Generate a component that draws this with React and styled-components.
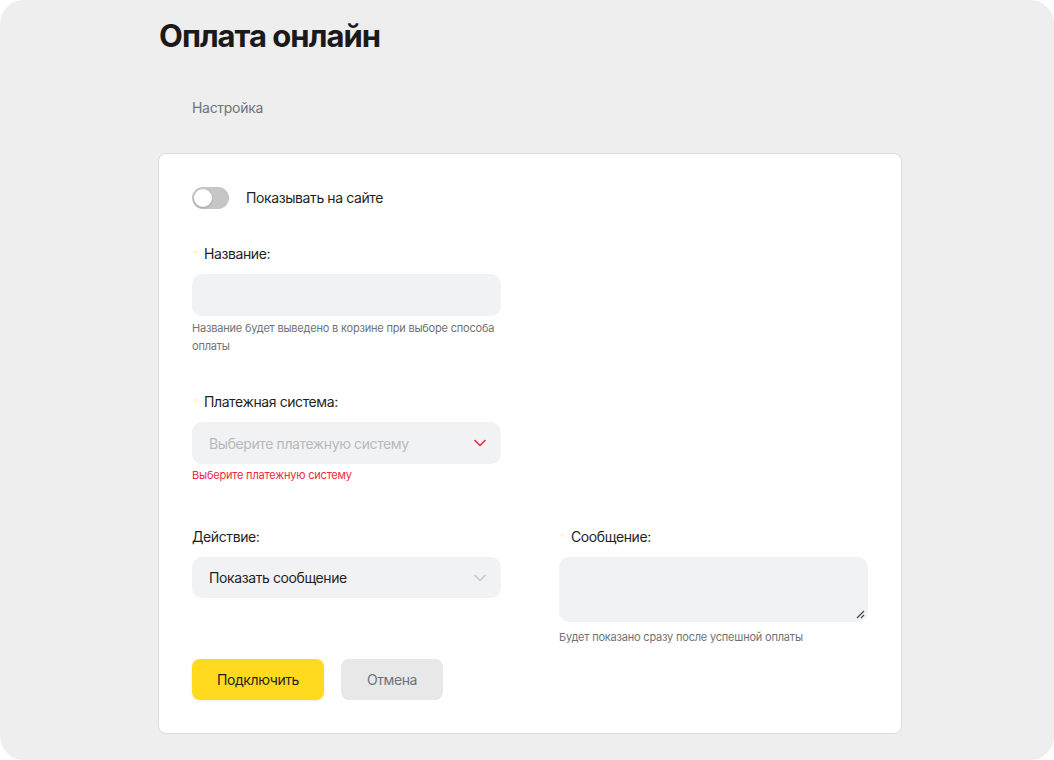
import React from "react";
import styled, { createGlobalStyle } from "styled-components";

const GlobalStyles = createGlobalStyle`
  html, body {
    margin: 0;
    padding: 0;
    background: #ffffff;
  }
  body {
    font-family: Inter, "Noto Sans", "Liberation Sans", sans-serif;
    color: #1f1f1f;
  }
  * { box-sizing: border-box; }
`;

const Screen = styled.div`
  width: 1054px;
  height: 760px;
  background: #eeeeee;
  border-radius: 24px;
  padding: 18px 0 0 158px;
`;

const Title = styled.h1`
  margin: 0 0 0 1px;
  font-size: 31px;
  line-height: 36px;
  font-weight: 700;
  color: #1a1a1a;
  letter-spacing: -1px;
`;

const Tab = styled.div`
  margin: 45px 0 0 34px;
  font-size: 14px;
  line-height: 18px;
  color: #6f7278;
  font-weight: 400;
  letter-spacing: -0.3px;
`;

const Card = styled.div`
  margin-top: 36px;
  width: 744px;
  background: #ffffff;
  border: 1px solid #dcdcdc;
  border-radius: 8px;
  padding: 33px 33px 33px 33px;
`;

const ToggleRow = styled.div`
  display: flex;
  align-items: center;
  gap: 17px;
  height: 22px;
`;

const Toggle = styled.div`
  width: 37px;
  height: 22px;
  border-radius: 11px;
  background: #c6c6c6;
  position: relative;
  flex-shrink: 0;
`;

const Knob = styled.div`
  position: absolute;
  top: 2px;
  left: 2px;
  width: 18px;
  height: 18px;
  border-radius: 50%;
  background: #ffffff;
  box-shadow: 0 1px 2px rgba(0, 0, 0, 0.2);
`;

const Text = styled.span`
  font-size: 14px;
  line-height: 18px;
  color: #1f1f1f;
  letter-spacing: -0.4px;
`;

const Field = styled.div`
  width: 309px;
  margin-top: ${({ $top }) => $top || 0}px;
`;

const Label = styled.div`
  display: flex;
  align-items: center;
  font-size: 14px;
  line-height: 18px;
  color: #1f1f1f;
  height: 18px;
  letter-spacing: -0.4px;
`;

const Star = styled.span`
  color: #fdf2c4;
  font-size: 11px;
  width: 11px;
  margin-left: 1px;
`;

const Input = styled.div`
  margin-top: 11px;
  height: ${({ $h }) => $h || 42}px;
  background: #f1f2f4;
  border-radius: 10px;
  position: relative;
  display: flex;
  align-items: center;
  justify-content: space-between;
  padding: 0 15px 0 17px;
  font-size: 14px;
  letter-spacing: -0.4px;
  color: ${({ $muted }) => ($muted ? "#b8b9bc" : "#1f1f1f")};
`;

const Hint = styled.div`
  margin-top: ${({ $gap }) => $gap ?? 3}px;
  font-size: 11px;
  line-height: 18px;
  letter-spacing: -0.2px;
  color: ${({ $error }) => ($error ? "#ee2a45" : "#6f7278")};
`;

const Row = styled.div`
  display: flex;
  gap: 58px;
  margin-top: 44px;
`;

const Resize = styled.svg`
  position: absolute;
  right: 3px;
  bottom: 3px;
`;

const Buttons = styled.div`
  display: flex;
  gap: 17px;
  margin-top: 13px;
`;

const Button = styled.button`
  height: 41px;
  border: none;
  border-radius: 8px;
  font-family: inherit;
  font-size: 14px;
  letter-spacing: -0.4px;
  padding: 0;
  width: ${({ $w }) => $w}px;
  background: ${({ $primary }) => ($primary ? "#ffda1f" : "#e8e8e8")};
  color: ${({ $primary }) => ($primary ? "#1f1f1f" : "#6f7278")};
  box-shadow: ${({ $primary }) => ($primary ? "0 1px 3px rgba(0,0,0,0.08)" : "none")};
`;

const Chevron = ({ color }) => (
  <svg width="12" height="8" viewBox="0 0 12 8" fill="none">
    <path d="M1 1.5L6 6.5L11 1.5" stroke={color} strokeWidth="1.6" strokeLinecap="round" strokeLinejoin="round" />
  </svg>
);

export default function App() {
  return (
    <>
      <GlobalStyles />
      <Screen>
        <Title>Оплата онлайн</Title>
        <Tab>Настройка</Tab>
        <Card>
          <ToggleRow>
            <Toggle>
              <Knob />
            </Toggle>
            <Text>Показывать на сайте</Text>
          </ToggleRow>

          <Field $top={36}>
            <Label>
              <Star>*</Star>Название:
            </Label>
            <Input />
            <Hint>Название будет выведено в корзине при выборе способа оплаты</Hint>
          </Field>

          <Field $top={38}>
            <Label>
              <Star>*</Star>Платежная система:
            </Label>
            <Input $muted>
              Выберите платежную систему
              <Chevron color="#ee2a45" />
            </Input>
            <Hint $error $gap={2}>Выберите платежную систему</Hint>
          </Field>

          <Row>
            <Field>
              <Label>Действие:</Label>
              <Input $h={41}>
                Показать сообщение
                <Chevron color="#c8c9cc" />
              </Input>
            </Field>
            <Field>
              <Label>
                <Star>*</Star>Сообщение:
              </Label>
              <Input $h={65}>
                <Resize width="9" height="9" viewBox="0 0 9 9">
                  <path d="M8 1L1 8M8 5L5 8" stroke="#444" strokeWidth="1.2" />
                </Resize>
              </Input>
              <Hint $gap={6}>Будет показано сразу после успешной оплаты</Hint>
            </Field>
          </Row>

          <Buttons>
            <Button $primary $w={132}>Подключить</Button>
            <Button $w={102}>Отмена</Button>
          </Buttons>
        </Card>
      </Screen>
    </>
  );
}
